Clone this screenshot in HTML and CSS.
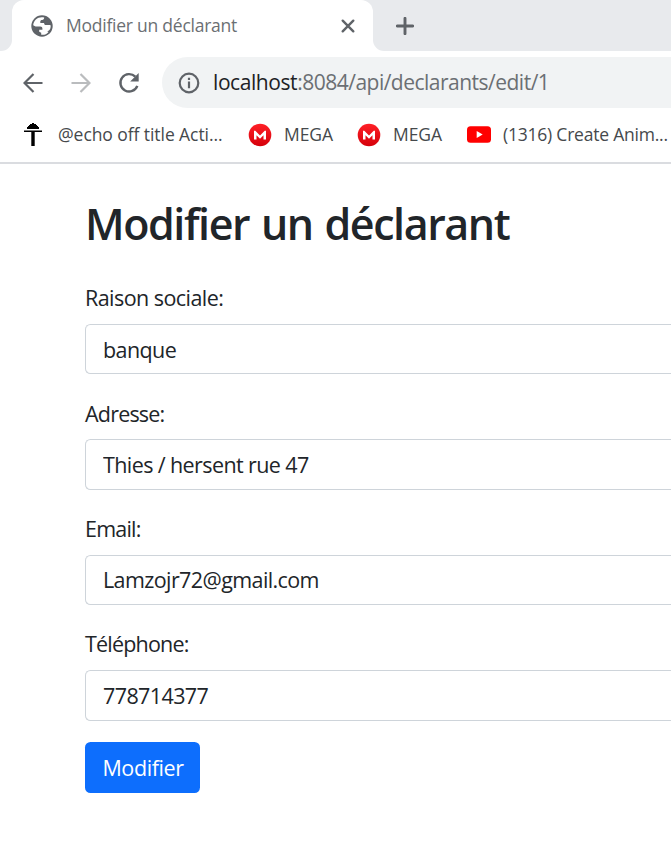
FILE: index.html
```html
<!DOCTYPE html>
<html lang="fr">
<head>
<meta charset="utf-8">
<title>Modifier un déclarant</title>
<link rel="stylesheet" href="styles.css">
</head>
<body>
<div class="tabstrip">
  <div class="strip-left"></div>
  <div class="tab">
    <svg class="globe" viewBox="0 0 22 22" width="22" height="22"><circle cx="11" cy="11" r="10.700" fill="#5f6368"/><path d="M13.200 2.500C8 .9 2.400 4.700 2.200 10.300l2.300 1.200h4.700c1.500 0 2.200.8 2.200 2.100v1.200H8.200v1.900l2 1.100v1.900c3 .5 5.500-.6 7.300-2.800l-1.300-.6c1.900-.4 3.500-2.200 3.500-5l-.3-1.200h-4.500c-1.200 0-1.800-.7-1.800-2.100H9.300V6.500c0-1.100.7-1.600 1.800-1.600 1.300 0 2.100-.9 2.100-2.400z" fill="#fff"/></svg>
    <span class="tab-title">Modifier un déclarant</span>
    <svg class="close" viewBox="0 0 14 14" width="14" height="14"><path d="M1.700 1.700l10.600 10.600M12.300 1.700L1.700 12.300" stroke="#5f6368" stroke-width="2.400" stroke-linecap="round"/></svg>
  </div>
  <div class="strip-right"><svg viewBox="0 0 18 18" width="18" height="18"><path d="M9 1.300v15.400M1.300 9h15.400" stroke="#5f6368" stroke-width="2.900" stroke-linecap="round"/></svg></div>
</div>
<div class="toolbar">
  <svg class="back" viewBox="0 0 20 20" width="20" height="20"><path d="M19.500 10H1.500M10.500 1L1.500 10l9 9" fill="none" stroke="#5f6368" stroke-width="2.200"/></svg>
  <svg class="forward" viewBox="0 0 20 20" width="20" height="20"><path d="M.5 10h18M9.500 1l9 9-9 9" fill="none" stroke="#babcbe" stroke-width="2.200"/></svg>
  <svg class="reload" viewBox="0 0 22 22" width="22" height="22"><path d="M17.300 4.700A8.700 8.700 0 1 0 19.300 13.800" fill="none" stroke="#5f6368" stroke-width="2.400"/><path d="M20.700 1v8.500h-8.500z" fill="#5f6368"/></svg>
  <div class="omnibox">
    <svg viewBox="0 0 22 22" width="22" height="22"><circle cx="11" cy="11" r="9.300" fill="none" stroke="#5f6368" stroke-width="2.200"/><path d="M9.900 5.700h2.200v2.300H9.900zM9.900 9.500h2.200v6.700H9.900z" fill="#5f6368"/></svg>
    <span class="url"><b>localhost</b>:8084/api/declarants/edit/1</span>
  </div>
</div>
<div class="bookmarks">
  <svg class="bm-arrow" viewBox="0 0 18 23" width="18" height="23"><path d="M8 0h2v1h2v1h1v1h1v1h1v2H3V4h1V3h1V2h1V1h2zM0 7.500h18v1.500H10.700v14H7.300V9H0z" fill="#000"/></svg>
  <span class="bm bm-echo">@echo off title Acti...</span>
  <svg class="mega mega-one" viewBox="0 0 24 24" width="24" height="24"><defs><linearGradient id="red" x2="0" y2="1"><stop stop-color="#ff2027"/><stop offset="1" stop-color="#d5000a"/></linearGradient></defs><circle cx="12" cy="12" r="11.300" fill="url(#red)"/><path d="M6 16.500V7.700h1.300l4.700 4.700 4.700-4.700H18v8.800h-2.500v-4.200L12 15.700l-3.500-3.400v4.200z" fill="#fff"/></svg>
  <span class="bm bm-mega">MEGA</span>
  <svg class="mega mega-two" viewBox="0 0 24 24" width="24" height="24"><circle cx="12" cy="12" r="11.300" fill="url(#red)"/><path d="M6 16.500V7.700h1.300l4.700 4.700 4.700-4.700H18v8.800h-2.500v-4.200L12 15.700l-3.500-3.400v4.200z" fill="#fff"/></svg>
  <span class="bm bm-mega">MEGA</span>
  <svg class="youtube" viewBox="0 0 24 17" width="24" height="17"><rect y=".3" width="24" height="16.400" rx="3.500" fill="#f00"/><path d="M9.700 5l6 3.500-6 3.500z" fill="#fff"/></svg>
  <span class="bm bm-yt">(1316) Create Anim...</span>
</div>
<main>
  <h1>Modifier un déclarant</h1>
  <form>
    <div class="field"><label for="raison">Raison sociale:</label><input id="raison" value="banque"></div>
    <div class="field"><label class="tight" for="adresse">Adresse:</label><input id="adresse" value="Thies / hersent rue 47"></div>
    <div class="field"><label class="tight" for="email">Email:</label><input id="email" value="Lamzojr72@gmail.com"></div>
    <div class="field"><label class="tight" for="tel">Téléphone:</label><input id="tel" value="778714377"></div>
    <button type="button">Modifier</button>
  </form>
</main>
</body>
</html>
```
FILE: styles.css
```css
* { box-sizing: border-box; }
body {
  margin: 0;
  height: 843px;
  overflow: hidden;
  background: #fff;
  color: #212529;
  font-family: "Open Sans", "Noto Sans", sans-serif;
  white-space: nowrap;
}
svg { display: block; flex: none; }
.tabstrip { display: flex; height: 51px; background: #fff; }
.strip-left { width: 12px; background: #e8eaed; border-bottom-right-radius: 11px; }
.tab {
  display: flex;
  align-items: center;
  width: 361px;
  padding: 0 18px 0 19px;
  background: linear-gradient(#e8eaed, #e8eaed) top / 100% 12px no-repeat;
  position: relative;
}
.tab::before { content: ""; position: absolute; inset: 0; background: #fff; border-radius: 12px 12px 0 0; }
.tab > * { position: relative; }
.tab-title { margin: -1px 0 0 13px; font-size: 17.500px; color: #6b6f73; letter-spacing: -.24px; }
.close { margin-left: auto; }
.strip-right { flex: 1; padding: 17px 0 0 23px; background: #e8eaed; border-bottom-left-radius: 11px; }
.toolbar { display: flex; align-items: center; height: 63px; padding-left: 23px; }
.forward { margin-left: 28px; }
.reload { margin-left: 27px; }
.omnibox {
  flex: 1;
  display: flex;
  align-items: center;
  height: 51px;
  margin-left: 22px;
  padding-left: 16px;
  background: #f1f3f4;
  border-radius: 26px 0 0 26px;
}
.url { margin: -1px 0 0 13px; font-size: 21px; color: #6b6f73; letter-spacing: -.51px; }
.url b { font-weight: inherit; color: #202124; letter-spacing: -.42px; }
.bookmarks { display: flex; align-items: center; height: 50px; padding: 0 0 7px 24px; border-bottom: 2px solid #dadce0; }
.bm { margin-top: -1px; font-size: 17.500px; color: #45494c; letter-spacing: -.07px; }
.bm-echo { width: 166px; margin-left: 16px; }
.bm-mega { width: 49px; margin-left: 12px; }
.mega-two { margin-left: 24px; }
.mega-one { margin-left: 24px; }
.youtube { margin-left: 25px; }
.bm-yt { width: 168px; margin-left: 12px; letter-spacing: -.22px; }
main { padding: 33px 0 0 85px; }
h1 { margin: 0 0 31.300px; font-size: 43px; line-height: 53px; font-weight: 600; letter-spacing: -1.420px; word-spacing: 2px; }
.field { margin-bottom: 22.300px; }
label { display: block; width: max-content; margin-bottom: 9.700px; font-size: 21.500px; line-height: 33px; letter-spacing: -.55px; }
.tight { letter-spacing: -.8px; }
input {
  display: block;
  width: 100%;
  height: 50.400px;
  padding: 0 17px;
  border: 1px solid #ced4da;
  border-right: 0;
  border-radius: 5.500px 0 0 5.500px;
  background: #fff;
  color: #212529;
  font: 21.500px "Open Sans", sans-serif;
  letter-spacing: -.6px;
}
button {
  display: block;
  width: 115px;
  height: 51px;
  margin-top: -1px;
  padding: 0 0 0 1px;
  border: 0;
  border-radius: 5.500px;
  background: #0d6efd;
  color: #fff;
  font: 21.500px "Open Sans", sans-serif;
  letter-spacing: -.4px;
}
```
